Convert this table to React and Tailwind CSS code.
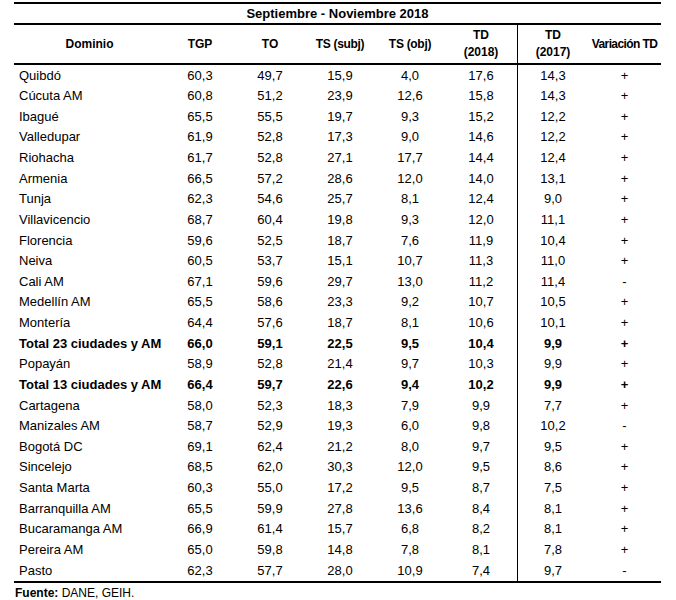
import React from 'react';

const rows = [
  ['Quibdó', '60,3', '49,7', '15,9', '4,0', '17,6', '14,3', '+'],
  ['Cúcuta AM', '60,8', '51,2', '23,9', '12,6', '15,8', '14,3', '+'],
  ['Ibagué', '65,5', '55,5', '19,7', '9,3', '15,2', '12,2', '+'],
  ['Valledupar', '61,9', '52,8', '17,3', '9,0', '14,6', '12,2', '+'],
  ['Riohacha', '61,7', '52,8', '27,1', '17,7', '14,4', '12,4', '+'],
  ['Armenia', '66,5', '57,2', '28,6', '12,0', '14,0', '13,1', '+'],
  ['Tunja', '62,3', '54,6', '25,7', '8,1', '12,4', '9,0', '+'],
  ['Villavicencio', '68,7', '60,4', '19,8', '9,3', '12,0', '11,1', '+'],
  ['Florencia', '59,6', '52,5', '18,7', '7,6', '11,9', '10,4', '+'],
  ['Neiva', '60,5', '53,7', '15,1', '10,7', '11,3', '11,0', '+'],
  ['Cali AM', '67,1', '59,6', '29,7', '13,0', '11,2', '11,4', '-'],
  ['Medellín AM', '65,5', '58,6', '23,3', '9,2', '10,7', '10,5', '+'],
  ['Montería', '64,4', '57,6', '18,7', '8,1', '10,6', '10,1', '+'],
  ['Total 23 ciudades y AM', '66,0', '59,1', '22,5', '9,5', '10,4', '9,9', '+', true],
  ['Popayán', '58,9', '52,8', '21,4', '9,7', '10,3', '9,9', '+'],
  ['Total 13 ciudades y AM', '66,4', '59,7', '22,6', '9,4', '10,2', '9,9', '+', true],
  ['Cartagena', '58,0', '52,3', '18,3', '7,9', '9,9', '7,7', '+'],
  ['Manizales AM', '58,7', '52,9', '19,3', '6,0', '9,8', '10,2', '-'],
  ['Bogotá DC', '69,1', '62,4', '21,2', '8,0', '9,7', '9,5', '+'],
  ['Sincelejo', '68,5', '62,0', '30,3', '12,0', '9,5', '8,6', '+'],
  ['Santa Marta', '60,3', '55,0', '17,2', '9,5', '8,7', '7,5', '+'],
  ['Barranquilla AM', '65,5', '59,9', '27,8', '13,6', '8,4', '8,1', '+'],
  ['Bucaramanga AM', '66,9', '61,4', '15,7', '6,8', '8,2', '8,1', '+'],
  ['Pereira AM', '65,0', '59,8', '14,8', '7,8', '8,1', '7,8', '+'],
  ['Pasto', '62,3', '57,7', '28,0', '10,9', '7,4', '9,7', '-'],
];

// column widths, TD (2018) carries the vertical rule
const grid = 'grid grid-cols-[151px_70px_70px_70px_70px_73px_70px_73px]';

export default function App() {
  return (
    <div
      className="w-[676px] h-[600px] bg-white text-black pt-[2px] pl-[14px]"
      style={{ fontFamily: '"Liberation Sans", Arial, sans-serif' }}
    >
      <div className="w-[647px]">
        {/* title */}
        <div className="border-t-2 border-b-2 border-black h-[23px] flex items-center justify-center text-[13px] font-bold">
          Septiembre - Noviembre 2018
        </div>

        {/* header */}
        <div className={`${grid} h-[40px] border-b-[2.5px] border-black text-[12px] font-bold leading-[17px] text-center`}>
          <div className="flex items-center justify-center">Dominio</div>
          <div className="flex items-center justify-center">TGP</div>
          <div className="flex items-center justify-center">TO</div>
          <div className="flex items-center justify-center tracking-[-0.3px]">TS (subj)</div>
          <div className="flex items-center justify-center tracking-[-0.3px]">TS (obj)</div>
          <div className="flex flex-col items-center justify-center border-r-[1.5px] border-black">
            <span>TD</span>
            <span>(2018)</span>
          </div>
          <div className="flex flex-col items-center justify-center">
            <span>TD</span>
            <span>(2017)</span>
          </div>
          <div className="flex items-center justify-center tracking-[-0.6px] whitespace-nowrap">Variación TD</div>
        </div>

        {/* body */}
        <div className="border-b-2 border-black text-[13px]">
          {rows.map((r) => (
            <div key={r[0]} className={`${grid} h-[20.64px] ${r[8] ? 'font-bold' : ''}`}>
              <div className="pl-[5px] flex items-center whitespace-nowrap">{r[0]}</div>
              <div className="flex items-center justify-center">{r[1]}</div>
              <div className="flex items-center justify-center">{r[2]}</div>
              <div className="flex items-center justify-center">{r[3]}</div>
              <div className="flex items-center justify-center">{r[4]}</div>
              <div className="flex items-center justify-center border-r-[1.5px] border-black">{r[5]}</div>
              <div className="flex items-center justify-center">{r[6]}</div>
              <div className="flex items-center justify-center">{r[7]}</div>
            </div>
          ))}
        </div>

        <div className="pt-[2px] pl-px text-[12px] leading-[16px]">
          <span className="font-bold">Fuente:</span> DANE, GEIH.
        </div>
      </div>
    </div>
  );
}
